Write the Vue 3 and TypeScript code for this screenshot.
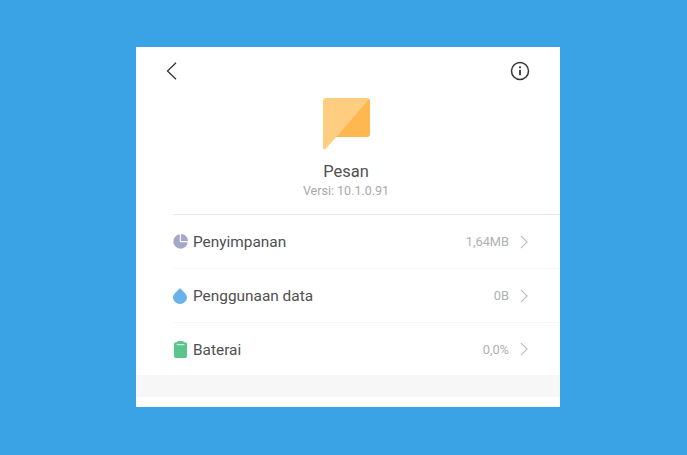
<script setup lang="ts">
interface Row {
  label: string
  value: string
  kind: 'storage' | 'data' | 'battery'
}

const rows: Row[] = [
  { label: 'Penyimpanan', value: '1,64MB', kind: 'storage' },
  { label: 'Penggunaan data', value: '0B', kind: 'data' },
  { label: 'Baterai', value: '0,0%', kind: 'battery' }
]
</script>

<template>
  <div class="page">
    <div class="card">
      <div class="topbar">
        <svg class="icon-back" width="12" height="18" viewBox="0 0 12 18">
          <path d="M10 .8 1.500 9l8.500 8.200" fill="none" stroke="#333" stroke-width="1.300" />
        </svg>
        <svg width="20" height="20" viewBox="0 0 20 20">
          <circle cx="10" cy="10" r="8.500" fill="none" stroke="#333" stroke-width="1.500" />
          <circle cx="10" cy="6.300" r="1.100" fill="#333" />
          <rect x="9.100" y="8.800" width="1.800" height="5.400" fill="#333" />
        </svg>
      </div>

      <div class="app-info">
        <svg class="app-icon" width="47" height="52" viewBox="0 0 47 52">
          <path d="M3.500 0h40a3.500 3.500 0 0 1 3.500 3.500v32a3.500 3.500 0 0 1-3.500 3.500H13L2.500 51Q0 52.500 0 49V3.500A3.500 3.500 0 0 1 3.500 0z" fill="#ffcd80" />
          <path d="M46 1Q47 2 47 3.500v32a3.500 3.500 0 0 1-3.500 3.500H13.500z" fill="#ffb74f" />
        </svg>
        <div class="app-name">Pesan</div>
        <div class="app-version">Versi: 10.1.0.91</div>
      </div>

      <div class="list">
        <div v-for="row in rows" :key="row.label" class="row">
          <svg v-if="row.kind === 'storage'" class="row-icon" width="15" height="15" viewBox="0 0 15 15">
            <path d="M6.800 .3v7.900h7.900A7.200 7.200 0 1 1 6.800 .3z" fill="#a4a8c8" />
            <path d="M8 0a7 7 0 0 1 7 7H8z" fill="#a4a8c8" />
          </svg>
          <svg v-else-if="row.kind === 'data'" class="row-icon" width="15" height="16" viewBox="0 0 15 16">
            <path d="M7 0C9.500 3 14 6 14 9.500a7 6.500 0 0 1-14 0C0 6 4.500 3 7 0z" fill="#6cb2ea" />
          </svg>
          <svg v-else class="row-icon battery" width="13" height="17" viewBox="0 0 13 17">
            <path d="M3.500 0h6v1.300h1.800a1.700 1.700 0 0 1 1.700 1.700v12.300a1.700 1.700 0 0 1-1.700 1.700H1.700A1.700 1.700 0 0 1 0 15.300V3a1.700 1.700 0 0 1 1.700-1.700h1.800z" fill="#5cc58c" />
            <rect x="2.500" y="3" width="8" height="1.300" rx=".6" fill="#c8eed8" />
          </svg>
          <span class="row-label">{{ row.label }}</span>
          <span class="row-value">{{ row.value }}</span>
          <svg class="chevron" width="9" height="14" viewBox="0 0 9 14">
            <path d="M.8 .8 7.200 7 .8 13.200" fill="none" stroke="#bdbdbd" stroke-width="1.100" />
          </svg>
        </div>
      </div>

      <div class="band"></div>
      <div class="foot"></div>
    </div>
  </div>
</template>

<style>
html,
body {
  margin: 0;
  background: #3aa3e6;
}
</style>

<style scoped>
.page {
  width: 687px;
  height: 455px;
  padding-top: 47px;
  box-sizing: border-box;
  background: #3aa3e6;
  font-family: Roboto, 'Liberation Sans', sans-serif;
  overflow: hidden;
}

.card {
  width: 424px;
  height: 360px;
  margin-left: 136px;
  background: #fff;
  display: flex;
  flex-direction: column;
}

.topbar {
  display: flex;
  justify-content: space-between;
  align-items: center;
  height: 20px;
  padding: 14px 30px 0 30px;
}

.icon-back {
  display: block;
}

.app-info {
  display: flex;
  flex-direction: column;
  align-items: center;
  padding-right: 4px;
  padding-top: 17px;
  height: 133px;
  box-sizing: border-box;
}

.app-icon {
  display: block;
}

.app-name {
  margin-top: 12px;
  font-size: 16.500px;
  line-height: 20px;
  color: #505050;
}

.app-version {
  margin-top: 1px;
  font-size: 12.500px;
  line-height: 16px;
  color: #a8a8a8;
}

.list {
  margin-left: 37px;
  border-top: 1px solid #e8e8e8;
}

.row {
  height: 53px;
  display: flex;
  align-items: center;
  padding-right: 32px;
  border-bottom: 1px solid #f7f7f7;
}

.row:last-child {
  height: 52px;
  border-bottom: none;
}

.row-icon {
  display: block;
  flex-shrink: 0;
}

.row-icon.battery {
  margin-left: 1px;
  margin-right: 1px;
}

.row-label {
  margin-left: 5px;
  font-size: 15.400px;
  color: #505050;
}

.row:last-child .row-label,
.row:last-child .row-value {
  margin-top: 1px;
}

.row-value {
  margin-left: auto;
  font-size: 12.800px;
  color: #b0b0b0;
}

.chevron {
  display: block;
  margin-left: 11px;
  margin-right: -1px;
}

.band {
  height: 22px;
  background: #f7f7f7;
}

.foot {
  height: 10px;
  background: #fff;
}
</style>
